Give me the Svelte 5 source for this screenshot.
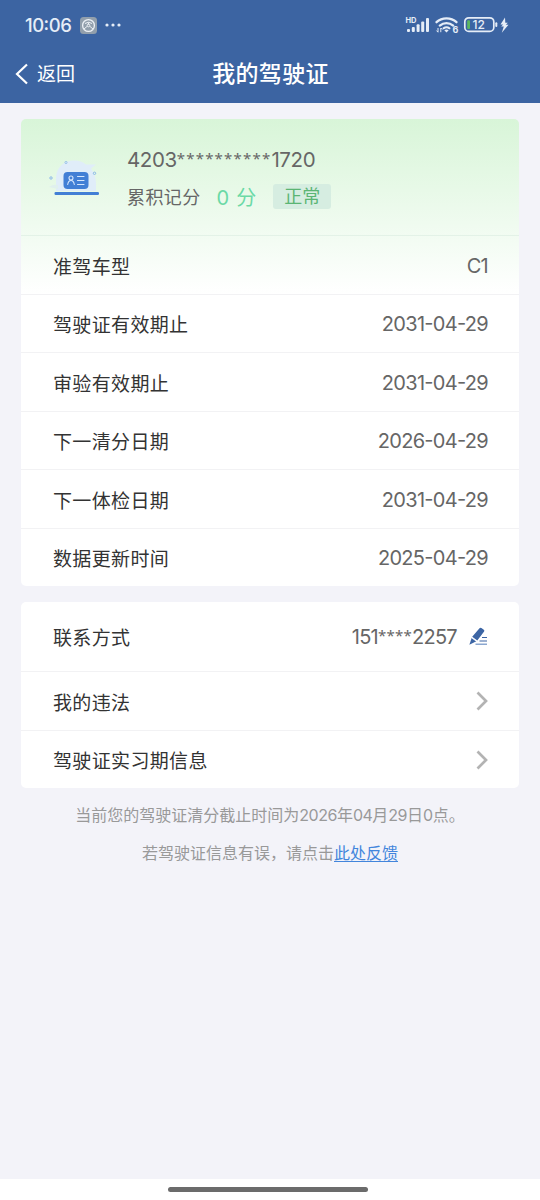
<script lang="ts">
  type Item = { label: string; value: string };

  const scoreLabel = "累积记分";
  let licenceNo = $state("4203**********1720");
  let score = $state(0);
  let phone = $state("151****2257");

  const items: Item[] = [
    { label: "准驾车型", value: "C1" },
    { label: "驾驶证有效期止", value: "2031-04-29" },
    { label: "审验有效期止", value: "2031-04-29" },
    { label: "下一清分日期", value: "2026-04-29" },
    { label: "下一体检日期", value: "2031-04-29" },
    { label: "数据更新时间", value: "2025-04-29" },
  ];

  const links = ["我的违法", "驾驶证实习期信息"];

  // splits "151****2257" into head, stars and tail
  const split = (text: string) => text.split(/(\*+)/);
</script>

{#snippet masked(text: string)}
  {#each split(text) as part}<span class:stars={part.startsWith("*")}>{part}</span>{/each}
{/snippet}

<div class="page">
  <header>
    <div class="status">
      <span class="clock">10:06</span>
      <svg class="app" width="17" height="17" viewBox="0 0 17 17">
        <rect width="17" height="17" rx="3.5" fill="#929fac" />
        <g fill="none" stroke="#edf1f6" stroke-width="1.3">
          <circle cx="8.5" cy="8.5" r="5.9" />
          <path d="M8.500 5.500v2M4 12l3.200-2.700M13 12L9.800 9.300M5 6.500q3.500-2.500 7 0" stroke-width="1" />
          <circle cx="8.5" cy="8.5" r="1.3" stroke-width="1" />
        </g>
      </svg>
      <svg class="dots" width="16" height="4" viewBox="0 0 16 4" fill="#e6edf7">
        <circle cx="2" cy="2" r="1.6" />
        <circle cx="8" cy="2" r="1.6" />
        <circle cx="14" cy="2" r="1.6" />
      </svg>
      <svg class="system" width="106" height="20" viewBox="0 0 106 20" fill="#e6edf7">
        <text x="0.5" y="7.8" class="hd">HD</text>
        <rect x="2" y="14" width="3" height="3" rx="1" />
        <rect x="6.8" y="12" width="3" height="5" rx="1" />
        <rect x="11.6" y="9.3" width="3" height="7.7" rx="1" />
        <rect x="16.2" y="6.5" width="3" height="10.5" rx="1" />
        <rect x="21" y="3" width="3" height="14" rx="1" />
        <g fill="none" stroke="#e6edf7" stroke-width="2.3" stroke-linecap="round">
          <path d="M31.500 7.200c5.500-5.200 14.500-5.200 20 0M34.800 10.600c4-3.400 9.400-3.400 13.400 0" />
          <path d="M38.500 13.300c2-1.300 4-1.300 6 0" stroke-width="2" />
        </g>
        <path d="M39.300 15.300q2.200-1.500 4.400 0l-2.200 2.200z" />
        <path d="M33 13v4.200M31.500 15.600l1.500 1.600M35.800 17.200V13M35.800 13l1.500 1.500" fill="none" stroke="#e6edf7" />
        <text x="47.600" y="17.600" class="wifi">6</text>
        <rect x="59.800" y="2.800" width="29" height="13.600" rx="4" fill="none" stroke="#e6edf7" stroke-width="1.700" />
        <rect x="62.200" y="5.300" width="2.800" height="8.600" rx="1" fill="#5cb85f" />
        <text x="73.600" y="14" class="level">12</text>
        <rect x="90.300" y="7.300" width="2" height="4.600" rx="1" />
        <path d="M100 2.500l-4.500 7h2.600l-1.900 2h2.600l-2 6.300 6.700-8h-2.700l2-2h-2.500z" />
      </svg>
    </div>
    <nav>
      <button type="button" class="back">
        <svg width="14" height="22" viewBox="0 0 14 22">
          <path d="M12 1.500L2 11l10 9.500" fill="none" stroke="#fff" stroke-width="2.200" />
        </svg>
        <span>返回</span>
      </button>
      <h1>我的驾驶证</h1>
    </nav>
  </header>

  <main>
    <section class="card licence">
      <div class="summary">
        <svg class="badge" width="52" height="40" viewBox="0 0 52 40">
          <path d="M7 35V21C8 10 16 4.500 25 4.500c5 0 9 1.500 12 4h10l-5 4c3 4 5 9 5 15v7.500z" fill="#e0edf9" />
          <path d="M0 31q4-3 9-2v4z" fill="#e0f0ee" />
          <rect x="14.500" y="16" width="25" height="17" rx="4" fill="#427fd5" />
          <g fill="none" stroke="#d5e6fc" stroke-width="1.100" stroke-linecap="round">
            <circle cx="22" cy="22" r="2" />
            <path d="M18.700 28.500c.5-3 2-4 3.300-4s2.800 1 3.300 4M28.500 20.500h6.500M28.500 24.500h6.500M28.500 28.500h6.500" />
          </g>
          <rect x="5.500" y="36" width="44.500" height="3" rx="1.200" fill="#427fd5" />
          <g fill="none" stroke="#8bb9e8">
            <circle cx="17" cy="6.500" r="1.100" stroke-width=".8" />
            <circle cx="2" cy="22" r="1.200" />
            <circle cx="45.500" cy="17.300" r="1.200" />
          </g>
        </svg>
        <div class="info">
          <div class="number">{@render masked(licenceNo)}</div>
          <div class="score">
            <span class="score_label">{scoreLabel}</span>
            <span class="points">{score} 分</span>
            <span class="state">正常</span>
          </div>
        </div>
      </div>
      {#each items as item}
        <div class="row">
          <span class="label">{item.label}</span>
          <span class="value">{item.value}</span>
        </div>
      {/each}
    </section>

    <section class="card">
      <div class="row contact">
        <span class="label">联系方式</span>
        <span class="value phone">{@render masked(phone)}</span>
        <svg class="edit" width="19" height="19" viewBox="0 0 19 19">
          <path d="M10.500 1.200q.8-1 1.900-.2l2.400 1.700q1 .8.300 1.800L8.300 13.500 3.200 9.800z" fill="#3c65a4" />
          <path d="M2.700 10.800l4.700 3.500L.4 17.700z" fill="#3c65a4" />
          <path d="M2.500 10.600l5.300 3.900" stroke="#fff" stroke-width=".9" />
          <path d="M13 10.500h5M10.500 14h7.500" stroke="#3c65a4" stroke-width="1.200" />
          <path d="M6.500 17.300h11.500" stroke="#8ba7d0" stroke-width="1.600" />
        </svg>
      </div>
      {#each links as link}
        <div class="row">
          <span class="label">{link}</span>
          <svg class="arrow" width="12" height="20" viewBox="0 0 12 20">
            <path d="M1.500 1.500L10 10l-8.500 8.500" fill="none" stroke="#b3b3b3" stroke-width="2.700" />
          </svg>
        </div>
      {/each}
    </section>

    <p class="note until">当前您的驾驶证清分截止时间为<span>2026</span>年<span>04</span>月<span>29</span>日<span>0</span>点。</p>
    <p class="note">若驾驶证信息有误，请点击<a href="#feedback">此处反馈</a></p>
  </main>

  <footer><div class="handle"></div></footer>
</div>

<style>
  :global(body) {
    background: #f3f3f9;
  }

  .page {
    box-sizing: border-box;
    height: 1200px;
    display: flex;
    flex-direction: column;
    overflow: hidden;
    font-family: Inter, "Noto Sans CJK SC", sans-serif;
    font-feature-settings: "case";
    color: #333;
  }

  header {
    height: 103px;
    flex: none;
    color: #fff;
    background: #3c64a2;
  }

  .status {
    height: 50px;
    display: flex;
    align-items: center;
    padding: 0 29px 0 25px;
  }
  .clock {
    width: 46px;
    font-size: 18.5px;
    font-weight: 500;
    letter-spacing: -0.5px;
    white-space: nowrap;
    color: #e6edf7;
  }
  .app {
    margin-left: 9px;
  }
  .dots {
    margin-left: 8px;
  }
  .system {
    margin-left: auto;
  }
  .hd {
    font-size: 7.5px;
    font-weight: 700;
  }
  .wifi {
    font-size: 9px;
    font-weight: 700;
  }
  .level {
    font-size: 12px;
    font-weight: 500;
    text-anchor: middle;
  }

  nav {
    height: 47px;
    display: grid;
    grid-template-columns: 1fr auto 1fr;
    align-items: center;
  }
  .back {
    display: flex;
    align-items: center;
    gap: 8px;
    padding: 0 0 0 15px;
    border: none;
    background: none;
    color: inherit;
    font: inherit;
    font-size: 19px;
  }
  .back span {
    padding-top: 2px;
    line-height: 26px;
  }
  h1 {
    margin: 0;
    padding: 1px 0 0 1px;
    line-height: 34px;
    font-size: 23px;
    font-weight: 500;
    letter-spacing: 0.3px;
  }

  main {
    flex: 1;
    padding: 16px 21px 0;
  }

  .card {
    margin-bottom: 16px;
    border-radius: 5px;
    overflow: hidden;
    background: #fff;
  }
  .licence {
    background: linear-gradient(#d8f5d8, #fff 175px);
  }

  .summary {
    box-sizing: border-box;
    height: 116.4px;
    display: flex;
    padding: 25px 0 0 28px;
  }
  .badge {
    margin-top: 12px;
  }
  .info {
    margin-left: 26px;
  }
  .number {
    height: 32px;
    line-height: 32px;
    font-size: 20.5px;
    letter-spacing: -0.4px;
    color: #666;
  }
  .number .stars {
    letter-spacing: 1.2px;
  }
  .stars {
    line-height: 1;
    font-family: "Noto Sans", sans-serif;
    font-size: 15px;
    letter-spacing: 0.2px;
    vertical-align: 3px;
  }
  .score {
    height: 40px;
    display: flex;
    align-items: center;
    font-size: 18px;
    color: #666;
  }
  .score_label {
    letter-spacing: 0.4px;
  }
  .points {
    margin-left: 16px;
    font-size: 20px;
    word-spacing: 1.5px;
    color: #6bd9a6;
  }
  .state {
    width: 58px;
    height: 25px;
    margin-left: 17px;
    line-height: 25px;
    text-align: center;
    border-radius: 3px;
    color: #5bb574;
    background: #d6ede1;
  }

  .row {
    box-sizing: border-box;
    height: 58.5px;
    display: flex;
    align-items: center;
    justify-content: space-between;
    padding: 0 31px 0 32px;
    border-top: 1px solid #f2f2f4;
  }
  .licence .row:nth-child(2) {
    border-top-color: #e3f2e7;
  }
  .label {
    font-size: 19px;
    letter-spacing: 0.35px;
  }
  .value {
    padding-top: 1px;
    font-size: 20px;
    letter-spacing: -0.7px;
    color: #666;
  }

  .contact {
    height: 69px;
    border-top: none;
  }
  .phone {
    margin-left: auto;
  }
  .edit {
    margin-left: 12px;
  }

  .note {
    height: 38px;
    margin: 0;
    line-height: 38px;
    font-size: 16px;
    text-align: center;
    white-space: nowrap;
    color: #999;
  }
  .until {
    margin-top: -8px;
  }
  .note span {
    letter-spacing: -0.5px;
  }
  .note a {
    color: #4285dc;
    text-underline-offset: 2px;
  }

  footer {
    height: 21px;
    flex: none;
    display: flex;
    align-items: center;
    justify-content: center;
    background: #fff;
  }
  .handle {
    width: 200px;
    height: 5px;
    margin-left: -4px;
    border-radius: 3px;
    background: #6b6b6b;
  }
</style>
